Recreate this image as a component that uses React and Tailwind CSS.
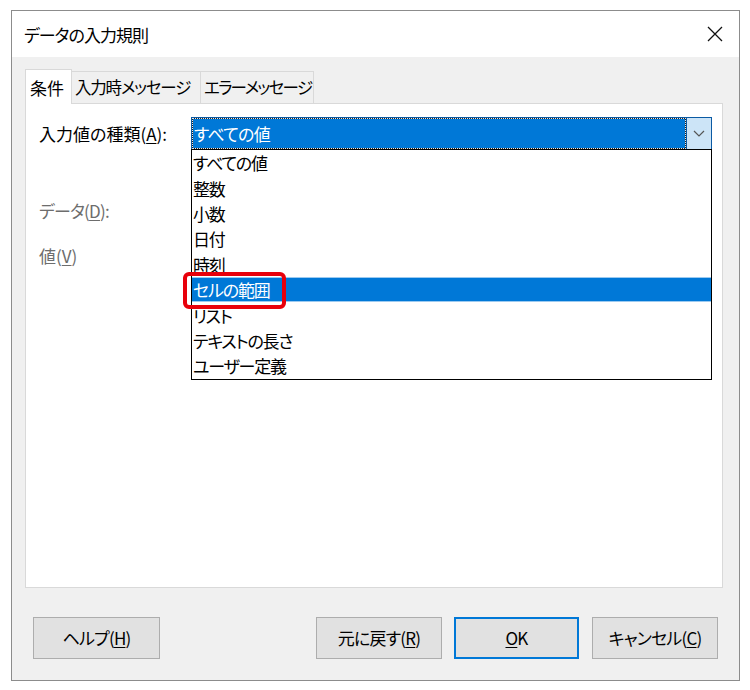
import React from "react";

const items = ["すべての値", "整数", "小数", "日付", "時刻", "セルの範囲", "リスト", "テキストの長さ", "ユーザー定義"];

function Btn({ children, w, primary }) {
  return (
    <div
      className={`h-[42px] ${w} flex items-center justify-center bg-[#e1e1e1] text-[17px] text-black whitespace-nowrap tracking-[-0.8px] ${
        primary ? "border-2 border-[#0078d7]" : "border border-[#adadad]"
      }`}
    >
      {children}
    </div>
  );
}

export default function App() {
  return (
    <div className="w-[750px] h-[690px] bg-white font-['Noto_Sans_CJK_JP','Meiryo_UI',sans-serif] [font-feature-settings:'palt'] text-black overflow-hidden">
      <div className="ml-[11px] pt-[10px]">
        <div className="w-[729px] h-[671px] border border-[#8c8c8c] flex flex-col bg-[#f0f0f0]">
          {/* title bar */}
          <div className="h-[46px] bg-white flex items-center justify-between pl-[12px] pr-[16px]">
            <span className="text-[17px] leading-none whitespace-nowrap tracking-[-1px]">データの入力規則</span>
            <svg width="16" height="16" viewBox="0 0 16 16" className="mt-[-1px]">
              <path d="M1 1 L15 15 M15 1 L1 15" stroke="#111" strokeWidth="1.3" fill="none" />
            </svg>
          </div>

          {/* body */}
          <div className="flex-1 flex flex-col pl-[13px] pr-[16px] pt-[12px]">
            {/* tabs */}
            <div className="h-[34px] flex items-end relative z-10">
              <div className="h-[35px] -mb-[1px] w-[47px] bg-white border-l border-t border-r border-[#d9d9d9] flex items-center pl-[4px] text-[17px] leading-none whitespace-nowrap">
                条件
              </div>
              <div className="h-[32px] w-[129px] border-t border-r border-[#d9d9d9] flex items-center pl-[3px] text-[16.5px] leading-none whitespace-nowrap tracking-[-1.2px]">
                入力時メッセージ
              </div>
              <div className="h-[32px] w-[113px] border-t border-r border-[#d9d9d9] flex items-center pl-[3px] text-[16.5px] leading-none whitespace-nowrap tracking-[-1.7px]">
                エラーメッセージ
              </div>
            </div>

            {/* panel */}
            <div className="h-[485px] bg-white border border-[#d9d9d9] flex flex-col pl-[13px] pt-[13px]">
              <div className="flex items-center h-[33px]">
                <div className="w-[152px] text-[17px] leading-none whitespace-nowrap">
                  入力値の種類(<u className="underline-offset-2">A</u>):
                </div>
                <div className="relative w-[521px] h-[33px] border border-[#0b5aa3] flex">
                  <div className="flex-1 bg-[#222] border border-dotted border-[#e8e8e8] bg-clip-border">
                    <div className="w-full h-full bg-[#0078d7] flex items-center text-white text-[17px] leading-none pl-[1px] whitespace-nowrap tracking-[-0.8px]">
                      すべての値
                    </div>
                  </div>
                  <div className="w-[25px] bg-[#cce4f7] border-l border-[#0b5aa3] flex items-center justify-center">
                    <svg width="12" height="7" viewBox="0 0 12 7">
                      <path d="M1 1 L6 6 L11 1" stroke="#555" strokeWidth="1.2" fill="none" />
                    </svg>
                  </div>

                  {/* dropdown list */}
                  <div className="absolute left-[-1px] top-full w-[521px] h-[231px] border border-black bg-white z-20">
                    {items.map((t, i) => (
                      <div
                        key={t}
                        className={`h-[25.4px] flex items-center pl-[1px] text-[17px] leading-none whitespace-nowrap tracking-[-1.2px] ${
                          i === 5 ? "bg-[#0078d7] text-white border-y border-[#9ccaf0]" : "text-black"
                        }`}
                      >
                        {t}
                      </div>
                    ))}
                    <div className="absolute left-[-9px] top-[122px] w-[103px] h-[37px] border-[4px] border-[#e8000b] rounded-[6px]" />
                  </div>
                </div>
              </div>

              <div className="mt-[48px] h-[25px] flex items-center text-[17px] leading-none text-[#6d6d6d] whitespace-nowrap tracking-[-0.8px]">
                データ(<u className="underline-offset-2">D</u>):
              </div>
              <div className="mt-[20px] h-[25px] flex items-center text-[17px] leading-none text-[#6d6d6d] whitespace-nowrap">
                値(<u className="underline-offset-2">V</u>)
              </div>
            </div>

            {/* buttons */}
            <div className="mt-[29px] flex items-center pl-[8px] pr-[5px]">
              <Btn w="w-[127px]">
                ヘルプ(<u className="underline-offset-2">H</u>)
              </Btn>
              <div className="flex-1" />
              <Btn w="w-[126px]">
                元に戻す(<u className="underline-offset-2">R</u>)
              </Btn>
              <div className="w-[12px]" />
              <Btn w="w-[125px]" primary>
                <u className="underline-offset-2">O</u>K
              </Btn>
              <div className="w-[13px]" />
              <Btn w="w-[126px]">
                キャンセル(<u className="underline-offset-2">C</u>)
              </Btn>
            </div>
          </div>
        </div>
      </div>
    </div>
  );
}
